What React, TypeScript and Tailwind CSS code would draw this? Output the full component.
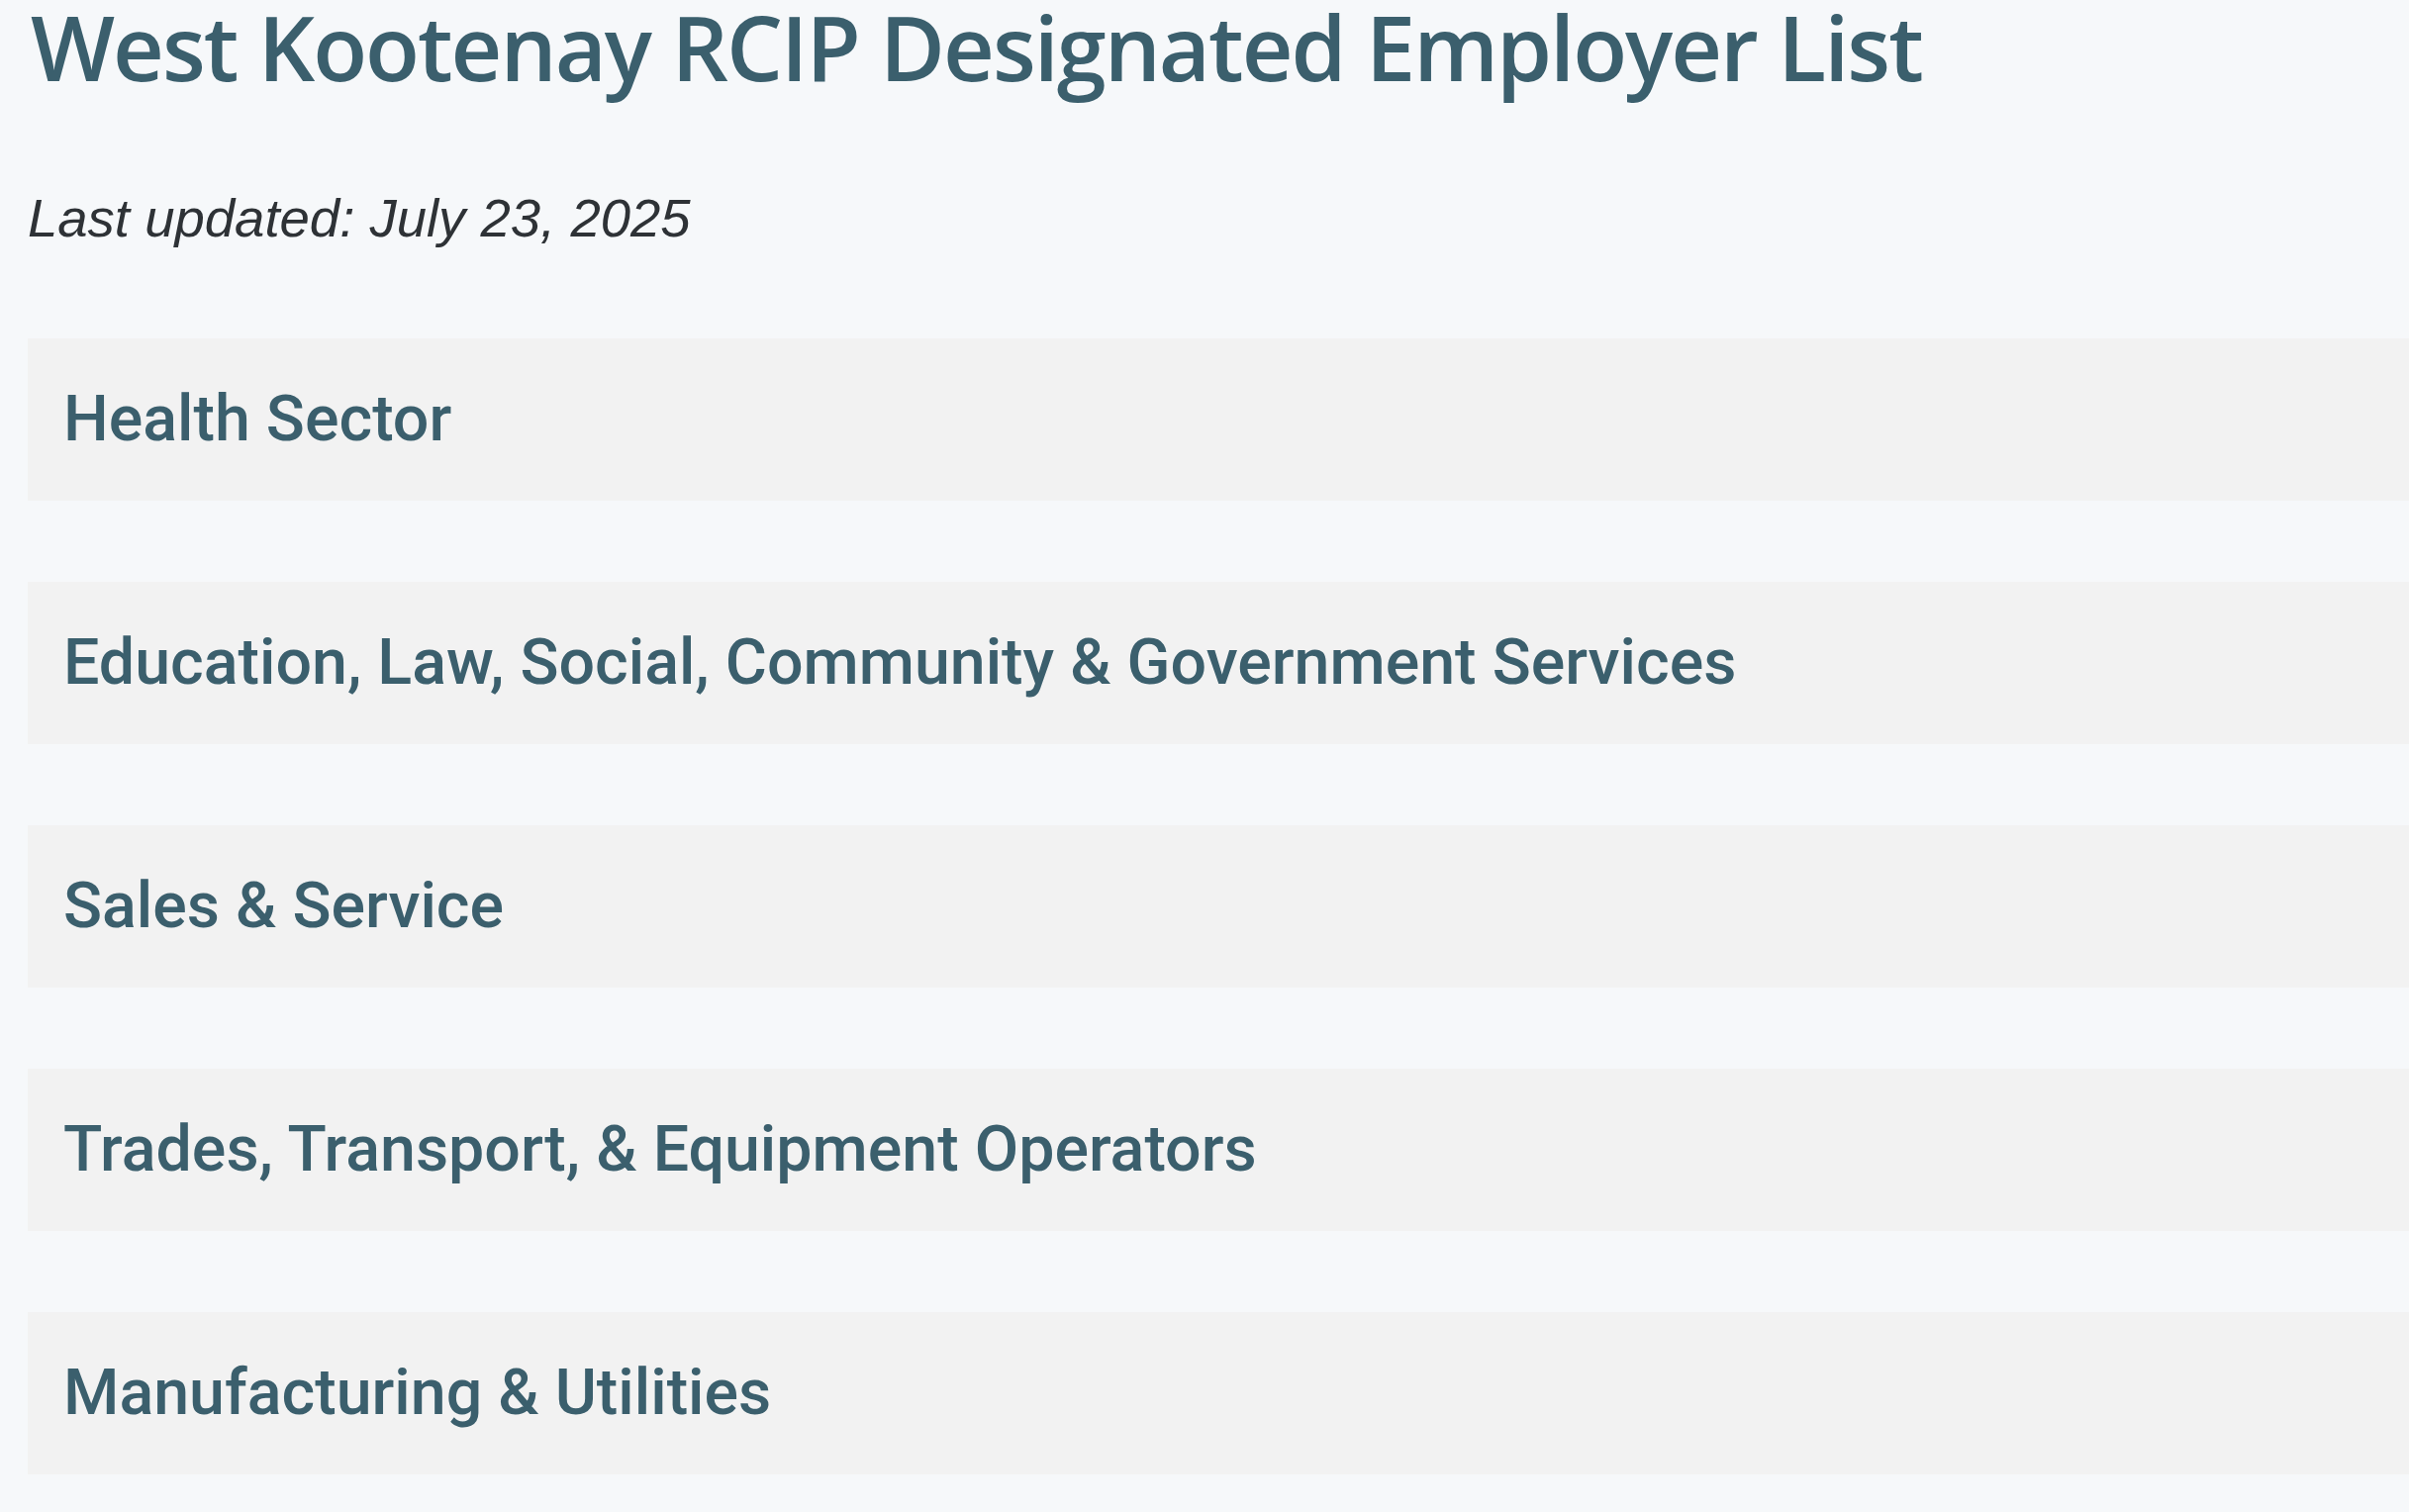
import React from "react";

const sectors = [
  "Health Sector",
  "Education, Law, Social, Community & Government Services",
  "Sales & Service",
  "Trades, Transport, & Equipment Operators",
  "Manufacturing & Utilities",
];

export default function App() {
  return (
    <div className="min-h-screen w-full overflow-hidden bg-[#f6f8fa]">
      <div className="pl-[28px]">
        <h1
          className="pt-[2px] pl-[3px] text-[90px] leading-none font-semibold tracking-[-2px] whitespace-nowrap text-[#3b5f6d]"
          style={{ fontFamily: '"Open Sans", sans-serif' }}
        >
          West Kootenay RCIP Designated Employer List
        </h1>
        <p
          className="mt-[102px] text-[54.5px] leading-none italic text-[#2e3236]"
          style={{ fontFamily: '"Liberation Sans", Arial, sans-serif' }}
        >
          Last updated: July 23, 2025
        </p>
        <div className="mt-[93px] flex flex-col gap-[82px]">
          {sectors.map((s) => (
            <div
              key={s}
              className="flex h-[164px] items-center bg-[#f2f2f2] pl-[36px]"
            >
              <span
                className="text-[64.5px] leading-none font-medium whitespace-nowrap text-[#3b5f6d]"
                style={{ fontFamily: "Roboto, sans-serif" }}
              >
                {s}
              </span>
            </div>
          ))}
        </div>
      </div>
    </div>
  );
}
